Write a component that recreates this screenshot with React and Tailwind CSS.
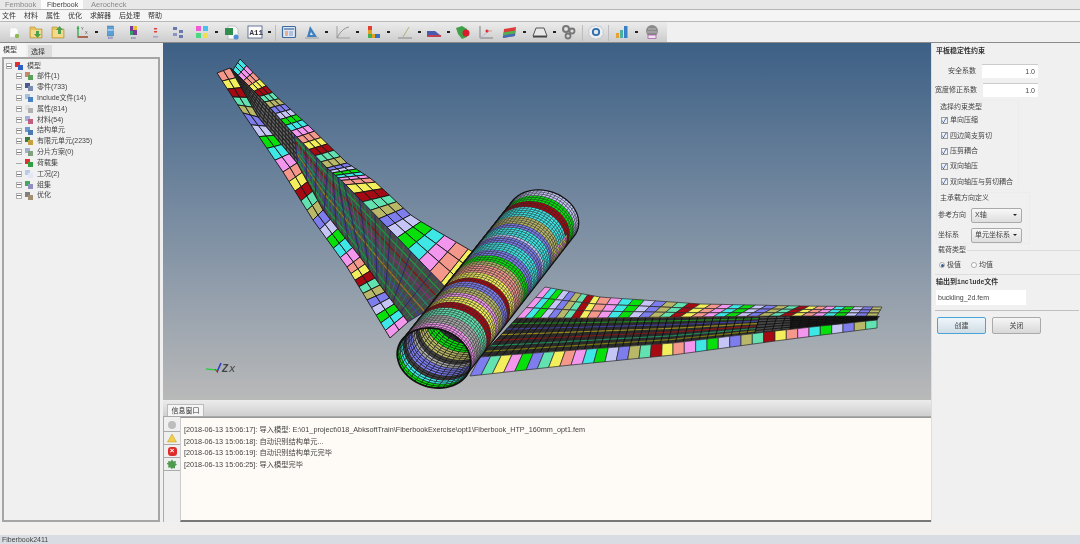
import { useMemo } from "react";

const FONT = "font-['Liberation_Sans','Noto_Sans_CJK_SC',sans-serif]";

const SALMON = "#f5988c";
const YELLOW = "#f3ee5c";
const RED = "#a50a12";
const AQUA = "#62e2b0";
const KHAKI = "#b9b768";
const PERI = "#7d7dee";
const LAV = "#c6c6f6";
const GREEN = "#08e00c";
const CYAN = "#3fe6e6";
const ORCHID = "#f396ee";
const GREY = "#a9a9a9";
const CYCLE = [SALMON, YELLOW, RED, AQUA, KHAKI, PERI, LAV, GREEN, CYAN, ORCHID];

// point on a polyline, u from 0 to 1
const along = (pts, u) => {
  const f = Math.min(u, 0.9999) * (pts.length - 1);
  const i = Math.floor(f);
  const k = f - i;
  return [pts[i][0] + (pts[i + 1][0] - pts[i][0]) * k, pts[i][1] + (pts[i + 1][1] - pts[i][1]) * k];
};
const mix = (a, b, v) => [a[0] + (b[0] - a[0]) * v, a[1] + (b[1] - a[1]) * v];
const poly = (p) => p.map((q) => `${q[0].toFixed(1)},${q[1].toFixed(1)}`).join(" ");

// strip of coloured blocks between two edges
const bandCells = (edgeA, edgeB, blocks, across, colorAt) => {
  const out = [];
  for (let i = 0; i < blocks; i++) {
    for (let j = 0; j < across; j++) {
      const u0 = i / blocks;
      const u1 = (i + 1) / blocks;
      const v0 = j / across;
      const v1 = (j + 1) / across;
      out.push({
        p: [
          mix(along(edgeA, u0), along(edgeB, u0), v0),
          mix(along(edgeA, u1), along(edgeB, u1), v0),
          mix(along(edgeA, u1), along(edgeB, u1), v1),
          mix(along(edgeA, u0), along(edgeB, u0), v1),
        ],
        c: colorAt(i, j),
      });
    }
  }
  return out;
};

const Cells = ({ cells, stroke = "#141414", sw = 0.9 }) => (
  <g stroke={stroke} strokeWidth={sw}>
    {cells.map((c, i) => (
      <polygon key={i} points={poly(c.p)} fill={c.c} />
    ))}
  </g>
);

// thin mesh lines between two edges, lengthwise lines take their colour from lineColor
const Mesh = ({ edgeA, edgeB, nAlong, nAcross, fill, cross, lineColor, from = 0, to = 1 }) => {
  const lines = [];
  const steps = 24;
  for (let j = 0; j <= nAcross; j++) {
    const pts = [];
    for (let s = 0; s <= steps; s++) {
      const u = from + ((to - from) * s) / steps;
      pts.push(mix(along(edgeA, u), along(edgeB, u), j / nAcross));
    }
    lines.push(<polyline key={`a${j}`} points={poly(pts)} fill="none" stroke={lineColor(j)} strokeWidth="1.2" />);
  }
  for (let i = 0; i <= nAlong; i++) {
    const u = from + ((to - from) * i) / nAlong;
    const p = [along(edgeA, u), along(edgeB, u)];
    lines.push(<polyline key={`c${i}`} points={poly(p)} fill="none" stroke={cross(i)} strokeWidth="0.9" />);
  }
  const outline = [];
  for (let s = 0; s <= steps; s++) outline.push(along(edgeA, from + ((to - from) * s) / steps));
  for (let s = steps; s >= 0; s--) outline.push(along(edgeB, from + ((to - from) * s) / steps));
  return (
    <g>
      <polygon points={poly(outline)} fill={fill} />
      {lines}
    </g>
  );
};

const RINGS = [
  [ORCHID, 3], [GREY, 4], [AQUA, 4], [RED, 3], [YELLOW, 3], [ORCHID, 2], [KHAKI, 3], [PERI, 3], [RED, 2],
  [YELLOW, 3], [SALMON, 4], [KHAKI, 2], [GREEN, 3], [PERI, 3], [CYAN, 4], [PERI, 3], [LAV, 1], [CYAN, 4],
  [PERI, 2], [KHAKI, 4], [CYAN, 5], [RED, 3], [GREEN, 3], [LAV, 3],
];
const INNER = [GREEN, CYAN, "#444", PERI, PERI, GREY, "#444", KHAKI, KHAKI, GREEN, GREEN, "#333"];

const C0 = [434, 358];
const C1 = [543, 219];
const A = [34, 15];
const B = [-14, 26];

const cyl = (t, th) => {
  const s = 1 - 0.03 * t;
  const c = mix(C0, C1, t);
  return [c[0] + s * (A[0] * Math.cos(th) + B[0] * Math.sin(th)), c[1] + s * (A[1] * Math.cos(th) + B[1] * Math.sin(th))];
};

const lOuterL = [[217, 73], [243, 113], [283, 172], [313, 220], [347, 267], [367, 300], [390, 338]];
const lInnerL = [[230, 68], [258, 117], [297, 163], [323, 210], [360, 257], [385, 292], [408, 322]];
const lOuterR = [[240, 59], [277, 97], [310, 127], [347, 163], [373, 180], [413, 217], [480, 256]];
const lInnerR = [[233, 70], [263, 100], [293, 133], [327, 168], [343, 182], [390, 230], [452, 294]];
const rTop = [[545, 287], [600, 297], [700, 304], [800, 306], [882, 307]];
const rBot = [[517, 318], [587, 318], [680, 317], [780, 316], [877, 316]];
const loTop = [[480, 357], [576, 350], [673, 343], [775, 331], [877, 320]];
const loBot = [[470, 376], [571, 365], [673, 355], [775, 341], [877, 328]];

const Wings = () => {
  const data = useMemo(() => {
    const rightCycle = [ORCHID, CYAN, GREEN, LAV, PERI, KHAKI, AQUA, RED, YELLOW, SALMON];
    const loFirst = [PERI, AQUA, YELLOW, ORCHID, GREEN, PERI, AQUA, YELLOW];

    const rings = [];
    RINGS.forEach(([c, n]) => {
      for (let i = 0; i < n; i++) rings.push(c);
    });
    const outer = [];
    const NR = rings.length;
    const NT = 30;
    for (let r = 0; r < NR; r++) {
      for (let k = 0; k < NT; k++) {
        const t0 = r / NR;
        const t1 = (r + 1) / NR;
        const a0 = -Math.PI * (k / NT);
        const a1 = -Math.PI * ((k + 1) / NT);
        let c = rings[r];
        if (r > 56 && r < 66 && k < 5) c = (r + k) % 2 ? YELLOW : ORCHID;
        outer.push({ p: [cyl(t0, a0), cyl(t1, a0), cyl(t1, a1), cyl(t0, a1)], c });
      }
    }
    const inner = [];
    const NI = INNER.length * 2;
    for (let r = 0; r < NI; r++) {
      for (let k = 0; k < 20; k++) {
        const t0 = (r / NI) * 0.34;
        const t1 = ((r + 1) / NI) * 0.34;
        const a0 = Math.PI * (k / 20);
        const a1 = Math.PI * ((k + 1) / 20);
        inner.push({ p: [cyl(t0, a0), cyl(t1, a0), cyl(t1, a1), cyl(t0, a1)], c: INNER[r >> 1] });
      }
    }

    let front = "";
    let sil = "";
    for (let k = 0; k <= 60; k++) {
      const q = cyl(0, (k / 60) * Math.PI * 2);
      front += `${k ? "L" : "M"}${q[0].toFixed(1)} ${q[1].toFixed(1)}`;
      if (k <= 30) {
        const w = cyl(1, (-k / 30) * Math.PI);
        sil += `${k ? "L" : "M"}${w[0].toFixed(1)} ${w[1].toFixed(1)}`;
      }
    }

    return {
      outer,
      inner,
      front,
      sil,
      stripL: bandCells(lOuterL, lInnerL, 30, 2, (i) => CYCLE[i % 10]),
      stripR: bandCells(lOuterR, lInnerR, 34, 3, (i) => CYCLE[(i + 8) % 10]),
      top: bandCells(rTop, rBot, 36, 3, (i) => rightCycle[i % 10]),
      low: bandCells(loTop, loBot, 36, 1, (i) => (i < 8 ? loFirst[i] : rightCycle[(i - 8 + 9) % 10])),
    };
  }, []);

  const s0 = cyl(0, 0);
  const s1 = cyl(1, 0);
  const e0 = cyl(0, Math.PI);
  const e1 = cyl(1, Math.PI);
  const wingLines = ["#8a1010", "#1f9a3f", "#4040b0", "#a07a1a", "#1a8a7a", "#8a2a8a", "#8a1010", "#1f9a3f", "#4040b0"];
  const rightLines = ["#7a4a10", "#1f8a1f", "#4040a0", "#9a8a1a", "#8a1818", "#1f8a5a", "#7a7a10"];

  return (
    <svg viewBox="163 43 768 357" className="block w-[768px] h-[357px]">
      <clipPath id="mouth">
        <path d={data.front} />
      </clipPath>
      <Mesh edgeA={lInnerL} edgeB={lInnerR} nAlong={20} nAcross={6} from={0} to={0.34} fill="#666" cross={() => "#222"} lineColor={() => "#222"} />
      <Mesh edgeA={lInnerL} edgeB={lInnerR} nAlong={36} nAcross={8} from={0.34} to={1} fill="#484848" cross={(i) => (i % 3 ? "#1f7f4f" : "#26266a")} lineColor={(j) => wingLines[j]} />
      <Cells cells={data.stripL} />
      <Cells cells={data.stripR} />
      <Mesh edgeA={rBot} edgeB={loTop} nAlong={36} nAcross={7} from={0} to={0.7} fill="#2a2a2a" cross={() => "#0c0c0c"} lineColor={(j) => rightLines[j]} />
      <Mesh edgeA={rBot} edgeB={loTop} nAlong={14} nAcross={6} from={0.7} to={1} fill="#4a4a4a" cross={() => "#111"} lineColor={() => "#1a1a1a"} />
      <polygon points="790,316 880,316 877,320 790,330" fill="#0d0d0d" fillOpacity="0.75" />
      <Cells cells={data.top} stroke="#2a2a2a" sw={0.7} />
      <Cells cells={data.low} stroke="#2a2a2a" sw={0.7} />
      <Cells cells={data.outer} stroke="#1c1c1c" sw={0.4} />
      <path d={data.front} fill="#222" />
      <g clipPath="url(#mouth)">
        <Cells cells={data.inner} stroke="#141414" sw={0.55} />
      </g>
      <path d={data.front} fill="none" stroke="#111" strokeWidth="1.8" />
      <path d={data.sil} fill="none" stroke="#111" strokeWidth="1.2" />
      <line x1={s0[0]} y1={s0[1]} x2={s1[0]} y2={s1[1]} stroke="#111" strokeWidth="1.2" />
      <line x1={e0[0]} y1={e0[1]} x2={e1[0]} y2={e1[1]} stroke="#111" strokeWidth="1.2" />

      {/* axis triad */}
      <line x1="206" y1="369" x2="217" y2="370" stroke="#35c94a" strokeWidth="1.6" />
      <line x1="217" y1="372" x2="221" y2="363" stroke="#2b3fc0" strokeWidth="1.6" />
      <line x1="215" y1="369" x2="218" y2="373" stroke="#c03030" strokeWidth="1" />
      <text x="222" y="372" fontSize="10" fontStyle="italic" fontWeight="700" fill="#444" fontFamily="Liberation Sans">Z</text>
      <text x="229" y="372" fontSize="9" fontStyle="italic" fontWeight="700" fill="#555" fontFamily="Liberation Sans">X</text>
    </svg>
  );
};

const Ic = ({ children }) => (
  <svg viewBox="0 0 16 16" className="w-[16px] h-[16px] block">
    {children}
  </svg>
);

const Folder = ({ arrow }) => (
  <Ic>
    <path d="M2 3h5l1 2h6v9H2z" fill="#e9c45c" stroke="#b08d3a" strokeWidth="0.6" />
    <path d="M3 6h10v7H3z" fill="#f2d98c" />
    <path d={arrow} fill="#4da04d" />
  </Ic>
);

const tools = [
  { w: 22, i: <Ic><path d="M4 4h6l2 2v7H4z" fill="#fbfbfb" stroke="#ddd" strokeWidth="0.5" /><circle cx="11" cy="12" r="2.2" fill="#8fb84f" /></Ic> },
  { w: 22, i: <Folder arrow="M8 7h3v3h2l-3.500 4L6 10h2z" /> },
  { w: 24, i: <Folder arrow="M8 10V6H6l3.500-4L13 6h-2v4z" /> },
  { w: 29, d: 1, i: <Ic><path d="M4 2v11h10" fill="none" stroke="#2aa84a" strokeWidth="1.3" /><path d="M4 13h10" stroke="#d84040" strokeWidth="1.3" /><path d="M4 3l-1.500 2h3z" fill="#2aa84a" /><text x="7" y="6" fontSize="4" fill="#444">Y</text><text x="11" y="10" fontSize="4" fill="#444">X</text></Ic> },
  { w: 23, i: <Ic><rect x="4.500" y="2" width="6" height="10" fill="#5aa0d8" stroke="#555" strokeWidth="0.4" /><path d="M4.500 6h6" stroke="#e8f0f8" /><path d="M5 14h5" stroke="#7a7ac0" strokeWidth="1.400" strokeDasharray="1.500 .7" /></Ic> },
  { w: 22, i: <Ic><rect x="4" y="2" width="7" height="9" fill="#7a3a9a" /><rect x="7" y="2" width="4" height="4" fill="#e8c030" /><rect x="4" y="7" width="3" height="4" fill="#30a060" /><path d="M5 14h5" stroke="#7a7ac0" strokeWidth="1.400" strokeDasharray="1.500 .7" /></Ic> },
  { w: 22, i: <Ic><rect x="6" y="4" width="3" height="1.500" fill="#e24040" /><rect x="6" y="7" width="3" height="1.500" fill="#e24040" /><rect x="5" y="12" width="5" height="1.500" fill="#a0a0d8" /></Ic> },
  { w: 24, i: <Ic><rect x="3" y="3" width="4" height="3" fill="#6a78b0" /><rect x="9" y="6" width="4" height="3" fill="#6a78b0" /><rect x="3" y="9" width="4" height="3" fill="#8a94c0" /><rect x="9" y="11" width="4" height="3" fill="#6a78b0" /></Ic> },
  { w: 30, d: 1, i: <Ic><rect x="2" y="2" width="5" height="5" fill="#f05ad8" /><rect x="9" y="2" width="5" height="5" fill="#4ac0f0" /><rect x="2" y="9" width="5" height="5" fill="#4ad880" /><rect x="9" y="9" width="5" height="5" fill="#f0e050" /></Ic> },
  { w: 23, i: <Ic><path d="M4 2h7l3 3v10H4z" fill="#f8f8f8" stroke="#999" strokeWidth="0.5" /><rect x="1" y="4" width="8" height="7" fill="#2f8f4f" /><circle cx="12" cy="13" r="2.500" fill="#4a90d8" /></Ic> },
  { w: 34, d: 1, sep: 1, i: <Ic><rect x="1" y="2" width="14" height="12" fill="#fdfdfd" stroke="#445a88" strokeWidth="0.8" /><text x="2.500" y="11" fontSize="7.500" fontWeight="700" fill="#334" fontFamily="Liberation Mono">A11</text></Ic> },
  { w: 23, i: <Ic><rect x="1.500" y="2.500" width="13" height="11" rx="1" fill="#dfe8f2" stroke="#3f6aa0" strokeWidth="1.200" /><path d="M3 5h10" stroke="#3f6aa0" strokeWidth="1.200" /><rect x="4" y="7" width="3" height="5" fill="#e8b090" /><rect x="8" y="7" width="4" height="5" fill="#b0c0e0" /></Ic> },
  { w: 31, d: 1, i: <Ic><path d="M6 2l7 11H3z" fill="#3f80c0" /><path d="M7 8l2 3H6z" fill="#dfe8f2" /><path d="M1 14h14" stroke="#aaa" strokeWidth="1.300" /></Ic> },
  { w: 31, d: 1, i: <Ic><path d="M2 2v12h13" fill="none" stroke="#999" strokeWidth="0.9" /><path d="M2 14C5 8 9 4 14 3" fill="none" stroke="#888" strokeWidth="0.9" /></Ic> },
  { w: 31, d: 1, i: <Ic><path d="M2 2h4v8h8v4H2z" fill="#e6a020" /><path d="M2 2h4v4H2z" fill="#e04030" /><path d="M2 10h4v4H2z" fill="#40b050" /><path d="M9 10h5v4H9z" fill="#3a70c0" /></Ic> },
  { w: 29, d: 1, i: <Ic><path d="M1 14h14" stroke="#888" strokeWidth="1" /><path d="M6 13L12 3" stroke="#a8b878" strokeWidth="1" /></Ic> },
  { w: 29, d: 1, i: <Ic><path d="M1 7h8l5 4v2H1z" fill="#4a5ab0" /><path d="M1 11h14v2H1z" fill="#c04050" /></Ic> },
  { w: 23, i: <Ic><path d="M1 4l6-2 5 3v8l-5 2-4-5z" fill="#3fa048" /><circle cx="11" cy="9" r="3.500" fill="#d81c2c" /></Ic> },
  { w: 24, i: <Ic><path d="M2 2v12h13" fill="none" stroke="#777" strokeWidth="0.9" /><path d="M2 14L12 6" stroke="#b0b0e0" strokeWidth="0.8" /><circle cx="9" cy="7" r="1.500" fill="#e02020" /><path d="M9 7h5" stroke="#e08080" strokeWidth="0.7" /></Ic> },
  { w: 30, d: 1, i: <Ic><path d="M2 5l12-2-1 9-12 2z" fill="#dd3a3a" /><path d="M1.500 8.500l12-2-.5 3-12 2z" fill="#50b050" /><path d="M1 11.500l12-2-.2 2.500-12 2z" fill="#3a70c0" /></Ic> },
  { w: 29, d: 1, i: <Ic><path d="M4 4h8l3 8H1z" fill="#e8e8e8" stroke="#555" strokeWidth="1" /><path d="M1 12h14v1.500H1z" fill="#444" /></Ic> },
  { w: 27, sep: 1, i: <Ic><circle cx="5" cy="5" r="3" fill="none" stroke="#777" strokeWidth="2" /><circle cx="11" cy="7" r="2.500" fill="none" stroke="#777" strokeWidth="1.800" /><circle cx="7" cy="12" r="2.500" fill="none" stroke="#777" strokeWidth="1.800" /></Ic> },
  { w: 26, sep: 1, i: <Ic><path d="M8 1l2 1.500 2.500-.5 1 2.500 2 1.500-.7 2.500.7 2.500-2 1-1 2.500-2.500-.5-2 1.500-2-1.500-2.500.5-1-2.500-2-1 .7-2.500L.300 6 2.500 4.500l1-2.500L6 2.500z" fill="#eceff3" stroke="#b5bac0" strokeWidth="0.6" /><circle cx="8" cy="8" r="3.200" fill="#dfe8f2" stroke="#2f6ca8" strokeWidth="1.800" /></Ic> },
  { w: 30, d: 1, i: <Ic><rect x="2" y="9" width="3" height="5" fill="#e8a030" /><rect x="6" y="6" width="3" height="8" fill="#4ab0a0" /><rect x="10" y="2" width="3.500" height="12" fill="#3a80c8" /></Ic> },
  { w: 22, i: <Ic><circle cx="8" cy="7" r="6" fill="#8a8a8a" /><path d="M4 5h8M3 8h10" stroke="#ccc" strokeWidth="0.7" /><rect x="4" y="11" width="8" height="3.500" fill="#f2e2f2" stroke="#a050a0" strokeWidth="0.7" /></Ic> },
];

const Toolbar = () => (
  <div className="h-[22px] flex border-y border-t-[#b8b8b8] border-b-[#8a8a8a] bg-[#f0f0f0]">
    <div className="w-[667px] flex items-center pl-[6px] bg-linear-to-b from-[#ececec] to-[#cdcdcd]">
      {tools.map((t, i) => (
        <div key={i} className="flex items-center shrink-0 relative" style={{ width: t.w }}>
          <div className="w-[16px] flex justify-center">{t.i}</div>
          {t.d && <div className="ml-[5px] w-[3px] h-[2px] bg-[#222]" />}
          {t.sep && <div className="absolute right-[5px] top-[1px] h-[16px] w-px bg-[#bdbdbd]" />}
        </div>
      ))}
    </div>
  </div>
);

const Node = ({ color, second }) => (
  <svg viewBox="0 0 10 10" className="w-[10px] h-[10px] shrink-0">
    <rect x="1" y="1" width="5" height="5" fill={color} />
    <rect x="4" y="4" width="5" height="5" fill={second} />
  </svg>
);

const tree = [
  ["部件(1)", "#c58a6a", "#5aa05a"],
  ["零件(733)", "#4a5a90", "#7a8ab0"],
  ["Include文件(14)", "#a8c0e0", "#4a80c0"],
  ["属性(814)", "#e0e0e0", "#b0b0b0"],
  ["材料(54)", "#a0b0d8", "#c06080"],
  ["结构单元", "#6a9ad0", "#4a78b0"],
  ["有限元单元(2235)", "#3a7a3a", "#c8a040"],
  ["分片方案(0)", "#a0b0d0", "#80a080"],
  ["荷载集", "#e03030", "#30a040", true],
  ["工况(2)", "#b8cce8", "#dfe8f4"],
  ["组集", "#40a860", "#9090c0"],
  ["优化", "#808080", "#a09070"],
];

const Expander = () => (
  <span className="w-[6px] h-[6px] border border-[#b0b0b0] bg-white shrink-0 flex items-center justify-center">
    <span className="w-[4px] h-px bg-[#777]" />
  </span>
);

const LeftPanel = () => (
  <div className="w-[161px] shrink-0 flex flex-col bg-[#f0f0f0]">
    <div className="h-[14px] flex items-end text-[7px] text-[#333]">
      <div className="w-[26px] h-[14px] bg-[#f6f6f6] pl-[3px] leading-[13px]">模型</div>
      <div className="ml-[2px] w-[24px] h-[12px] bg-[#dcdcdc] pl-[3px] leading-[13px]">选择</div>
    </div>
    <div className="ml-[2px] mr-[1px] flex-1 border-2 border-[#a5a5a5] pt-[2px] text-[7px] text-[#444]">
      <div className="h-[10px] flex items-center pl-[2px] gap-[2px]">
        <Expander />
        <Node color="#e03030" second="#3060c0" />
        <span className="ml-[1px]">模型</span>
      </div>
      {tree.map(([label, a, b, leaf]) => (
        <div key={label} className="h-[10.85px] flex items-center pl-[12px] gap-[2px]">
          {leaf ? <span className="w-[6px] h-px bg-[#aaa] shrink-0" /> : <Expander />}
          <Node color={a} second={b} />
          <span className="ml-px whitespace-nowrap">{label}</span>
        </div>
      ))}
    </div>
  </div>
);

const logs = [
  ["[2018-06-13 15:06:17]:", "导入模型: E:\\01_project\\018_AbksoftTrain\\FiberbookExercise\\opt1\\Fiberbook_HTP_160mm_opt1.fem"],
  ["[2018-06-13 15:06:18]:", "自动识别结构单元..."],
  ["[2018-06-13 15:06:19]:", "自动识别结构单元完毕"],
  ["[2018-06-13 15:06:25]:", "导入模型完毕"],
];

const MessagePanel = () => (
  <div className="h-[122px] flex flex-col bg-[#e9e9e9]">
    <div className="h-[17px] flex items-end pl-[4px] bg-linear-to-b from-[#ececec] to-[#cfcfcf] border-b border-[#a8a8a8]">
      <div className="w-[37px] h-[12px] bg-[#f5f5f5] border border-b-0 border-[#bbb] text-center text-[7px] leading-[11px] text-[#333]">信息窗口</div>
    </div>
    <div className="flex-1 flex border-l border-[#aaa]">
      <div className="w-[16px] shrink-0 flex flex-col items-center pt-[2px] bg-[#efefef]">
        {["gear", "warn", "err", "ok"].map((k) => (
          <div key={k} className="h-[13px] w-full flex items-center justify-center border-b border-[#aaa]">
            {k === "gear" && <span className="w-[8px] h-[8px] rounded-full bg-[#bdbdbd]" />}
            {k === "warn" && (
              <svg viewBox="0 0 10 10" className="w-[10px] h-[10px]">
                <path d="M5 1l4.500 8H.500z" fill="#f2cf4a" stroke="#c09a20" strokeWidth="0.5" />
              </svg>
            )}
            {k === "err" && (
              <span className="w-[9px] h-[9px] rounded-[3px] bg-[#e02b2b] text-white text-[8px] leading-[8px] text-center font-bold">×</span>
            )}
            {k === "ok" && (
              <svg viewBox="0 0 10 10" className="w-[10px] h-[10px]">
                <path d="M5 .500l1.500 2 2.500-.5-.5 2.500 1.500 1-2 1.500 0 2.500-2-.5-1.500 1-1-1.500-2.500 0 .5-2.500-2-1.500 2-1L1 2l2.500.5z" fill="#4f9a4f" />
              </svg>
            )}
          </div>
        ))}
      </div>
      <div className="flex-1 bg-[#fefaf5] border-b-2 border-[#777] border-t border-l border-t-[#999] border-l-[#ccc] pl-[3px] pt-[6px] text-[7.25px] text-[#444]">
        {logs.map(([time, text]) => (
          <div key={time} className="h-[11.500px] leading-[11.500px] whitespace-nowrap">
            {time} {text}
          </div>
        ))}
      </div>
    </div>
  </div>
);

const Field = ({ label, value }) => (
  <div className="h-[14px] flex items-center justify-end w-[103px]">
    <span className="mr-[6px] whitespace-nowrap">{label}</span>
    <div className="w-[56px] h-[14px] bg-white border-t border-[#ccc] text-right pr-[3px] leading-[13px]">{value}</div>
  </div>
);

const Check = ({ label }) => (
  <div className="h-[15.300px] flex items-center pl-px">
    <span className="w-[7px] h-[7px] border border-[#999] bg-[#eef3f8] text-[#27408b] text-[7px] leading-[6px] text-center mr-[2px]">✓</span>
    {label}
  </div>
);

const Select = ({ value }) => (
  <div className="w-[51px] h-[15px] rounded-[2px] border border-[#aaa] bg-linear-to-b from-[#f8f8f8] to-[#dedede] flex items-center justify-between pl-[3px] pr-[4px]">
    <span>{value}</span>
    <span className="w-0 h-0 border-x-[2px] border-t-[2px] border-x-transparent border-t-[#222]" />
  </div>
);

const RightPanel = () => (
  <div className="flex-1 bg-[#f0f0f0] border-l border-[#ddd] pl-[3px] pt-[3px] text-[7px] text-[#444]">
    <div className="font-bold text-[#333] h-[10px] leading-[10px] pl-px">平板稳定性约束</div>
    <div className="mt-[8px]"><Field label="安全系数" value="1.0" /></div>
    <div className="mt-[5px]"><Field label="宽度修正系数" value="1.0" /></div>
    <div className="mt-[3px] ml-[2px] w-[82px] h-[90px] border border-[#ececec] pl-[2px]">
      <div className="h-[12px] leading-[12px]">选择约束类型</div>
      <Check label="单向压缩" />
      <Check label="四边简支剪切" />
      <Check label="压剪耦合" />
      <Check label="双向轴压" />
      <Check label="双向轴压与剪切耦合" />
    </div>
    <div className="mt-[2px] ml-px w-[94px] h-[52px] border border-[#ececec] pl-px">
      <div className="h-[12px] leading-[10px] pl-[2px]">主承载方向定义</div>
      <div className="flex items-center gap-[3px] h-[20px]">
        <span className="w-[30px]">参考方向</span>
        <Select value="X轴" />
      </div>
      <div className="flex items-center gap-[3px] h-[20px]">
        <span className="w-[30px]">坐标系</span>
        <Select value="单元坐标系" />
      </div>
    </div>
    <div className="mt-[1px] pl-[3px] h-[10px] leading-[10px] flex items-center">
      载荷类型
      <span className="flex-1 h-px bg-[#ddd] ml-px" />
    </div>
    <div className="mt-px h-[19px] flex items-center pl-[4px] border-b border-[#ddd]">
      <span className="w-[6px] h-[6px] rounded-full border border-[#aaa] bg-[#fff] flex items-center justify-center mr-[2px]">
        <span className="w-[3px] h-[3px] rounded-full bg-[#3a5a90]" />
      </span>
      极值
      <span className="w-[6px] h-[6px] rounded-full border border-[#aaa] bg-white ml-[10px] mr-[2px]" />
      均值
    </div>
    <div className="font-bold text-[#333] h-[12px] leading-[12px] mt-px pl-px">
      输出到<span className="font-['Liberation_Mono'] text-[6.500px]">include</span>文件
    </div>
    <div className="mt-[2px] ml-px w-[90px] h-[15px] bg-white pl-[2px] leading-[15px]">buckling_2d.fem</div>
    <div className="mt-[5px] h-px bg-[#c0c0c0] mr-px" />
    <div className="mt-[6px] ml-[2px] flex gap-[6px]">
      <div className="w-[49px] h-[17px] rounded-[2px] border border-[#4aa3d8] bg-linear-to-b from-[#eef6fa] to-[#d0dde6] text-center leading-[15px]">创建</div>
      <div className="w-[49px] h-[17px] rounded-[2px] border border-[#aaa] bg-linear-to-b from-[#f6f6f6] to-[#d8d8d8] text-center leading-[15px]">关闭</div>
    </div>
  </div>
);

export default function App() {
  return (
    <div className={`w-[1080px] h-[544px] overflow-hidden flex flex-col bg-[#f0f0f0] blur-[0.5px] ${FONT}`}>
      <div className="h-[10px] flex text-[#8a8a8a] bg-[#e8e8e8] border-b border-[#b5b5b5] leading-[9px]">
        <span className="pl-[5px] w-[41px] text-[7.500px]">Fembook</span>
        <span className="w-[42px] bg-[#fbfbfb] text-[#444] pl-[6px] text-[7px]">Fiberbook</span>
        <span className="pl-[8px] text-[7.500px]">Aerocheck</span>
      </div>
      <div className="h-[11px] flex items-center gap-[8px] pl-[2px] text-[7px] leading-[11px] text-[#333] bg-[#f5f5f5]">
        {["文件", "材料", "属性", "优化", "求解器", "后处理", "帮助"].map((m) => (
          <span key={m}>{m}</span>
        ))}
      </div>
      <Toolbar />
      <div className="h-[479px] flex">
        <LeftPanel />
        <div className="w-[768px] ml-[2px] shrink-0 flex flex-col">
          <div className="h-[357px] bg-linear-to-b from-[#3d6085] via-[#7a8da2] to-[#b9b9b9]">
            <Wings />
          </div>
          <MessagePanel />
        </div>
        <RightPanel />
      </div>
      <div className="h-[13px] bg-[#f2f0ee]" />
      <div className="h-[9px] bg-[#d9dde3] pl-[2px] text-[7px] leading-[10px] text-[#444]">Fiberbook2411</div>
    </div>
  );
}
